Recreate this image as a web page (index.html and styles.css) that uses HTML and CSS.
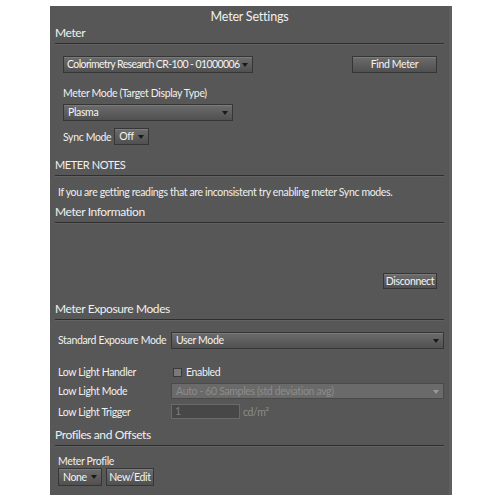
FILE: index.html
```html
<!DOCTYPE html>
<html>
<head>
<meta charset="utf-8">
<title>Meter Settings</title>
<link rel="stylesheet" href="styles.css">
</head>
<body>
<div class="panel">
  <div class="title">Meter Settings</div>

  <div class="head">Meter</div>
  <div class="row row-meter">
    <div class="select w-meter">Colorimetry Research CR-100 - 01000006<span class="arrow"></span></div>
    <div class="btn w-find">Find Meter</div>
  </div>
  <div class="label sub m-mode">Meter Mode (Target Display Type)</div>
  <div class="sub m-plasma"><div class="select w-plasma">Plasma<span class="arrow"></span></div></div>
  <div class="row sub m-sync">
    <span class="label">Sync Mode</span>
    <div class="select w-off">Off<span class="arrow"></span></div>
  </div>

  <div class="head m-notes caps">METER NOTES</div>
  <div class="note">If you are getting readings that are inconsistent try enabling meter Sync modes.</div>

  <div class="head m-info">Meter Information</div>
  <div class="row row-disc">
    <div class="btn w-disc">Disconnect</div>
  </div>

  <div class="head m-exp">Meter Exposure Modes</div>
  <div class="form">
    <div class="frow m-std">
      <span class="flabel">Standard Exposure Mode</span>
      <div class="select w-full tall">User Mode<span class="arrow"></span></div>
    </div>
    <div class="frow m-llh">
      <span class="flabel">Low Light Handler</span>
      <span class="check"></span><span class="label">Enabled</span>
    </div>
    <div class="frow m-llm">
      <span class="flabel">Low Light Mode</span>
      <div class="select w-full disabled">Auto - 60 Samples (std deviation avg)<span class="arrow"></span></div>
    </div>
    <div class="frow m-llt">
      <span class="flabel">Low Light Trigger</span>
      <div class="input">1</div><span class="unit">cd/m²</span>
    </div>
  </div>

  <div class="head m-prof">Profiles and Offsets</div>
  <div class="form">
    <div class="label m-plabel">Meter Profile</div>
    <div class="row">
      <div class="select w-none tall2">None<span class="arrow"></span></div>
      <div class="btn w-edit tall2">New/Edit</div>
    </div>
  </div>
</div>
</body>
</html>
```

FILE: styles.css
```css
html, body {
  margin: 0;
  padding: 0;
  background: #ffffff;
}

.panel {
  box-sizing: border-box;
  width: 402px;
  height: 489px;
  margin: 6px 0 0 50px;
  padding: 0 5px;
  background: #575757;
  border-right: 3px solid #5f5f5f;
  font-family: "Lato", "Open Sans", sans-serif;
  font-size: 10.5px;
  letter-spacing: -0.35px;
  color: #f0f0f0;
}

.title {
  text-align: center;
  font-size: 12.5px;
  letter-spacing: -0.2px;
  line-height: 18px;
  padding-top: 2px;
}

.head {
  font-size: 12px;
  letter-spacing: -0.4px;
  line-height: 14px;
  padding-bottom: 3px;
  border-bottom: 1px solid #2e2e2e;
  box-shadow: 0 1px 0 #626262;
}

.caps {
  font-size: 11px;
}

.m-notes { margin-top: 13px; }
.m-info { margin-top: 6px; }
.m-exp { margin-top: 13px; }
.m-prof { margin-top: 9px; }

.row {
  display: flex;
  align-items: center;
}

.row-meter {
  margin-top: 12px;
  padding: 0 7px 0 8px;
  justify-content: space-between;
}

.sub {
  padding-left: 8px;
}

.label {
  line-height: 14px;
}

.m-mode { margin-top: 13px; }
.m-plasma { margin-top: 4px; }
.m-sync { margin-top: 7px; }
.m-sync .label { margin-right: 3px; }

.note {
  margin-top: 9px;
  padding-left: 3px;
  line-height: 14px;
}

.row-disc {
  margin-top: 50px;
  padding-right: 7px;
  justify-content: flex-end;
}

.select {
  position: relative;
  box-sizing: border-box;
  height: 17px;
  line-height: 15px;
  padding: 0 12px 0 4px;
  border: 1px solid #363636;
  background: linear-gradient(#6c6c6c, #505050);
  box-shadow: inset 0 1px 0 #7a7a7a;
  color: #f4f4f4;
  white-space: nowrap;
  overflow: hidden;
}

.arrow {
  position: absolute;
  right: 4px;
  top: 6px;
  width: 0;
  height: 0;
  border-left: 3px solid transparent;
  border-right: 3px solid transparent;
  border-top: 4px solid #1a1a1a;
}

.btn {
  box-sizing: border-box;
  height: 17px;
  line-height: 15px;
  text-align: center;
  border: 1px solid #363636;
  background: linear-gradient(#6c6c6c, #505050);
  box-shadow: inset 0 1px 0 #7a7a7a;
  color: #f4f4f4;
  white-space: nowrap;
}

.w-meter {
  width: 190px;
  padding: 0 10px 0 3px;
  letter-spacing: -0.6px;
}
.w-find { width: 85px; }
.w-plasma { width: 170px; }
.w-off { width: 35px; }
.w-disc { width: 54px; height: 16px; line-height: 14px; }
.w-full { width: 273px; }
.w-none { width: 44px; }
.w-edit { width: 48px; margin-left: 4px; }
.tall2 { height: 18px; line-height: 16px; }

.form {
  padding-left: 3px;
}

.frow {
  display: flex;
  align-items: center;
}

.flabel {
  width: 113px;
  flex: none;
  line-height: 14px;
  white-space: nowrap;
}

.m-std { margin-top: 12px; }
.m-std .flabel { margin-top: -2px; }
.m-llh { margin-top: 16px; }
.m-llm { margin-top: 4px; }
.m-llt { margin-top: 5px; }

.check {
  box-sizing: border-box;
  width: 9px;
  height: 9px;
  margin: 0 4px 0 2px;
  border: 1px solid #3a3a3a;
  background: #7a7a7a;
}

.disabled {
  height: 16px;
  line-height: 14px;
  background: #6a6a6a;
  box-shadow: none;
  border-color: #4a4a4a;
  color: #8c8c8c;
}

.disabled .arrow {
  border-top-color: #9a9a9a;
}

.input {
  box-sizing: border-box;
  width: 69px;
  height: 15px;
  line-height: 13px;
  padding-left: 3px;
  border: 1px solid #6a6a6a;
  background: #474747;
  color: #7e7e7e;
}

.unit {
  margin-left: 3px;
  color: #8c8c8c;
}

.m-plabel {
  margin-top: 8px;
}
```
